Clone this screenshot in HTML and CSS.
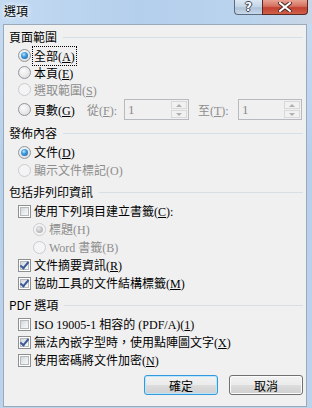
FILE: index.html
```html
<!DOCTYPE html>
<html lang="zh-Hant">
<head>
    <meta charset="UTF-8">
    <meta name="viewport" content="width=device-width, initial-scale=1.0">
    <title>選項</title>
    <link rel="stylesheet" href="styles.css">
</head>
<body>
<div class="window">
    <div class="titlebar">
        <span class="title">選項</span>
        <div class="caption-btns">
            <span class="cap-btn help">?</span>
            <span class="cap-btn close">
                <svg width="14" height="10" viewBox="0 0 14 10">
                    <path d="M2 1 L12 9 M12 1 L2 9" stroke="#4a2a25" stroke-width="4" stroke-linecap="square"/>
                    <path d="M2 1 L12 9 M12 1 L2 9" stroke="#fff" stroke-width="2" stroke-linecap="square"/>
                </svg>
            </span>
        </div>
    </div>

    <div class="client">
        <!-- 頁面範圍 -->
        <div class="group">
            <div class="group-head"><span>頁面範圍</span><i class="rule"></i></div>
            <div class="row short"><span class="radio checked"></span><span class="focus">全部(<u>A</u>)</span></div>
            <div class="row short"><span class="radio"></span><span>本頁(<u>E</u>)</span></div>
            <div class="row short disabled"><span class="radio"></span><span>選取範圍(<u>S</u>)</span></div>
            <div class="row pages">
                <span class="radio"></span>
                <span class="page-label">頁數(<u>G</u>)</span>
                <span class="from-label gray">從(<u>F</u>):</span>
                <span class="spin"><span class="spin-val">1</span><span class="spin-btns"><i class="up"></i><i class="down"></i></span></span>
                <span class="to-label gray">至(<u>T</u>):</span>
                <span class="spin last"><span class="spin-val">1</span><span class="spin-btns"><i class="up"></i><i class="down"></i></span></span>
            </div>
        </div>

        <!-- 發佈內容 -->
        <div class="group">
            <div class="group-head"><span>發佈內容</span><i class="rule"></i></div>
            <div class="row"><span class="radio checked"></span><span>文件(<u>D</u>)</span></div>
            <div class="row disabled"><span class="radio"></span><span>顯示文件標記(O)</span></div>
        </div>

        <!-- 包括非列印資訊 -->
        <div class="group">
            <div class="group-head"><span>包括非列印資訊</span><i class="rule"></i></div>
            <div class="row"><span class="check"></span><span>使用下列項目建立書籤(<u>C</u>):</span></div>
            <div class="row nested disabled"><span class="radio checked"></span><span>標題(H)</span></div>
            <div class="row nested disabled"><span class="radio"></span><span>Word 書籤(B)</span></div>
            <div class="row"><span class="check checked"></span><span>文件摘要資訊(<u>R</u>)</span></div>
            <div class="row"><span class="check checked"></span><span>協助工具的文件結構標籤(<u>M</u>)</span></div>
        </div>

        <!-- PDF 選項 -->
        <div class="group">
            <div class="group-head"><span>PDF 選項</span><i class="rule"></i></div>
            <div class="row"><span class="check"></span><span>ISO 19005-1 相容的 (PDF/A)(<u>1</u>)</span></div>
            <div class="row"><span class="check checked"></span><span>無法內嵌字型時，使用點陣圖文字(<u>X</u>)</span></div>
            <div class="row"><span class="check"></span><span>使用密碼將文件加密(<u>N</u>)</span></div>
        </div>

        <div class="buttons">
            <button class="btn default">確定</button>
            <button class="btn">取消</button>
        </div>
    </div>
</div>
</body>
</html>
```

FILE: styles.css
```css
body {
    margin: 0;
    font-family: "Liberation Serif", "Noto Sans CJK TC", serif;
    font-size: 12px;
    color: #000;
}
.window {
    width: 312px;
    height: 408px;
    background: linear-gradient(to bottom, #c6dcf2 0%, #b7d0ea 40%, #bcd3ec 100%);
    overflow: hidden;
}
.titlebar {
    height: 24px;
    display: flex;
    justify-content: space-between;
    background: linear-gradient(to right, #c3daf2 0%, #b4cfec 45%, #bad3ed 80%, #c9d6e6 100%);
}
.title {
    font-family: "Noto Sans CJK TC", sans-serif;
    padding: 3px 0 0 4px;
    line-height: 16px;
    text-shadow: 0 0 4px #fff, 0 0 6px #fff;
}
.caption-btns {
    display: flex;
    margin-right: 4px;
    height: 15px;
}
.cap-btn {
    display: flex;
    align-items: center;
    justify-content: center;
    height: 15px;
    box-sizing: border-box;
    border: 1px solid #5d6b7e;
    border-top: none;
}
.help {
    width: 28px;
    border-radius: 0 0 0 4px;
    background: linear-gradient(to bottom, #dce8f4 0%, #c3d4e6 50%, #aec2d8 55%, #c8d8ea 100%);
    color: #fff;
    font-family: "DejaVu Sans", sans-serif;
    font-weight: bold;
    font-size: 12px;
    text-shadow: 1px 0 0 #3c4654, -1px 0 0 #3c4654, 0 1px 0 #3c4654, 0 -1px 0 #3c4654;
    border-right: none;
}
.close {
    width: 46px;
    border-radius: 0 0 4px 0;
    border-color: #572a26;
    background: linear-gradient(to bottom, #e8a293 0%, #d6705f 45%, #c2412f 55%, #d0604a 100%);
}
.client {
    margin-left: 3px;
    width: 304px;
    height: 383px;
    box-sizing: border-box;
    border: 1px solid #9aaabb;
    background: #f0f0f0;
    padding: 2px 3px 0 5px;
}
.group-head {
    height: 18px;
    display: flex;
    align-items: center;
    font-family: "Noto Sans CJK TC", sans-serif;
    margin-bottom: 2px;
}
.group + .group .group-head {
    margin-top: 3px;
}
.rule {
    flex: 1;
    height: 1px;
    margin: 2px 0 0 6px;
    background: #d5dfe5;
}
.row {
    height: 18px;
    display: flex;
    align-items: center;
    padding-left: 9px;
    white-space: nowrap;
}
.row.short {
    height: 17px;
}
.row.nested {
    padding-left: 24px;
}
.row.pages {
    height: 21px;
    margin: 1px 0 1px;
}
.disabled,
.gray {
    color: #8d8d8d;
}
.radio,
.check {
    flex: none;
    width: 13px;
    height: 13px;
    box-sizing: border-box;
    margin-right: 3px;
    position: relative;
}
.radio {
    border-radius: 50%;
    border: 1px solid #8f969d;
    background: radial-gradient(circle at 40% 35%, #fbfbfb 0%, #e6e6e6 60%, #d3d3d3 100%);
}
.radio.checked::after {
    content: "";
    position: absolute;
    left: 2px;
    top: 2px;
    width: 7px;
    height: 7px;
    border-radius: 50%;
    background: radial-gradient(circle at 40% 35%, #b8e4ff 0%, #3c9ae0 40%, #1b5c94 100%);
}
.disabled .radio {
    border-color: #c9cccf;
    background: #f4f4f4;
}
.disabled .radio.checked::after {
    background: radial-gradient(circle at 40% 35%, #ececec 0%, #c2c2c2 50%, #a9a9a9 100%);
}
.check {
    border: 1px solid #8e8f8f;
    background: #fff;
}
.check::before {
    content: "";
    position: absolute;
    left: 1px;
    top: 1px;
    width: 9px;
    height: 9px;
    box-sizing: border-box;
    border: 1px solid #b4b9be;
    background: linear-gradient(135deg, #d3d6da 0%, #eceeef 60%, #f7f7f7 100%);
}
.check.checked::after {
    content: "";
    position: absolute;
    left: 3px;
    top: 0px;
    width: 3px;
    height: 7px;
    border: solid #3b5a98;
    border-width: 0 2px 2px 0;
    transform: rotate(40deg);
}
.focus {
    outline: 1px dotted #000;
    outline-offset: 0;
    padding: 0 1px;
    margin-left: -1px;
}
.page-label {
    width: 53px;
}
.from-label {
    width: 37px;
}
.to-label {
    width: 40px;
}
.spin {
    display: flex;
    width: 65px;
    height: 21px;
    box-sizing: border-box;
    border: 1px solid #b7babe;
    background: #f0f0f0;
    margin-right: 9px;
}
.spin.last {
    width: 64px;
    margin-right: 0;
}
.spin-val {
    flex: 1;
    color: #8d8d8d;
    padding: 2px 0 0 3px;
    font-size: 13px;
}
.spin-btns {
    width: 16px;
    display: flex;
    flex-direction: column;
    padding: 1px 1px 1px 0;
    gap: 1px;
}
.spin-btns i {
    flex: 1;
    border: 1px solid #d9d9d9;
    background: #f1f1f1;
    position: relative;
}
.spin-btns i::after {
    content: "";
    position: absolute;
    left: 4px;
    top: 2px;
    border-left: 3px solid transparent;
    border-right: 3px solid transparent;
}
.spin-btns .up::after {
    border-bottom: 3px solid #b0b0b0;
}
.spin-btns .down::after {
    border-top: 3px solid #b0b0b0;
}
.buttons {
    display: flex;
    justify-content: flex-end;
    gap: 11px;
    margin-top: 6px;
}
.btn {
    width: 74px;
    height: 20px;
    padding: 0;
    font-family: "Noto Sans CJK TC", sans-serif;
    font-size: 12px;
    color: #000;
    border: 1px solid #707070;
    border-radius: 3px;
    background: linear-gradient(to bottom, #f2f2f2 0%, #ebebeb 50%, #dddddd 51%, #cfcfcf 100%);
    box-shadow: inset 0 0 0 1px #fcfcfc;
}
.btn.default {
    border-color: #3399dd;
    box-shadow: inset 0 0 0 1px #bde6fd;
}
```
